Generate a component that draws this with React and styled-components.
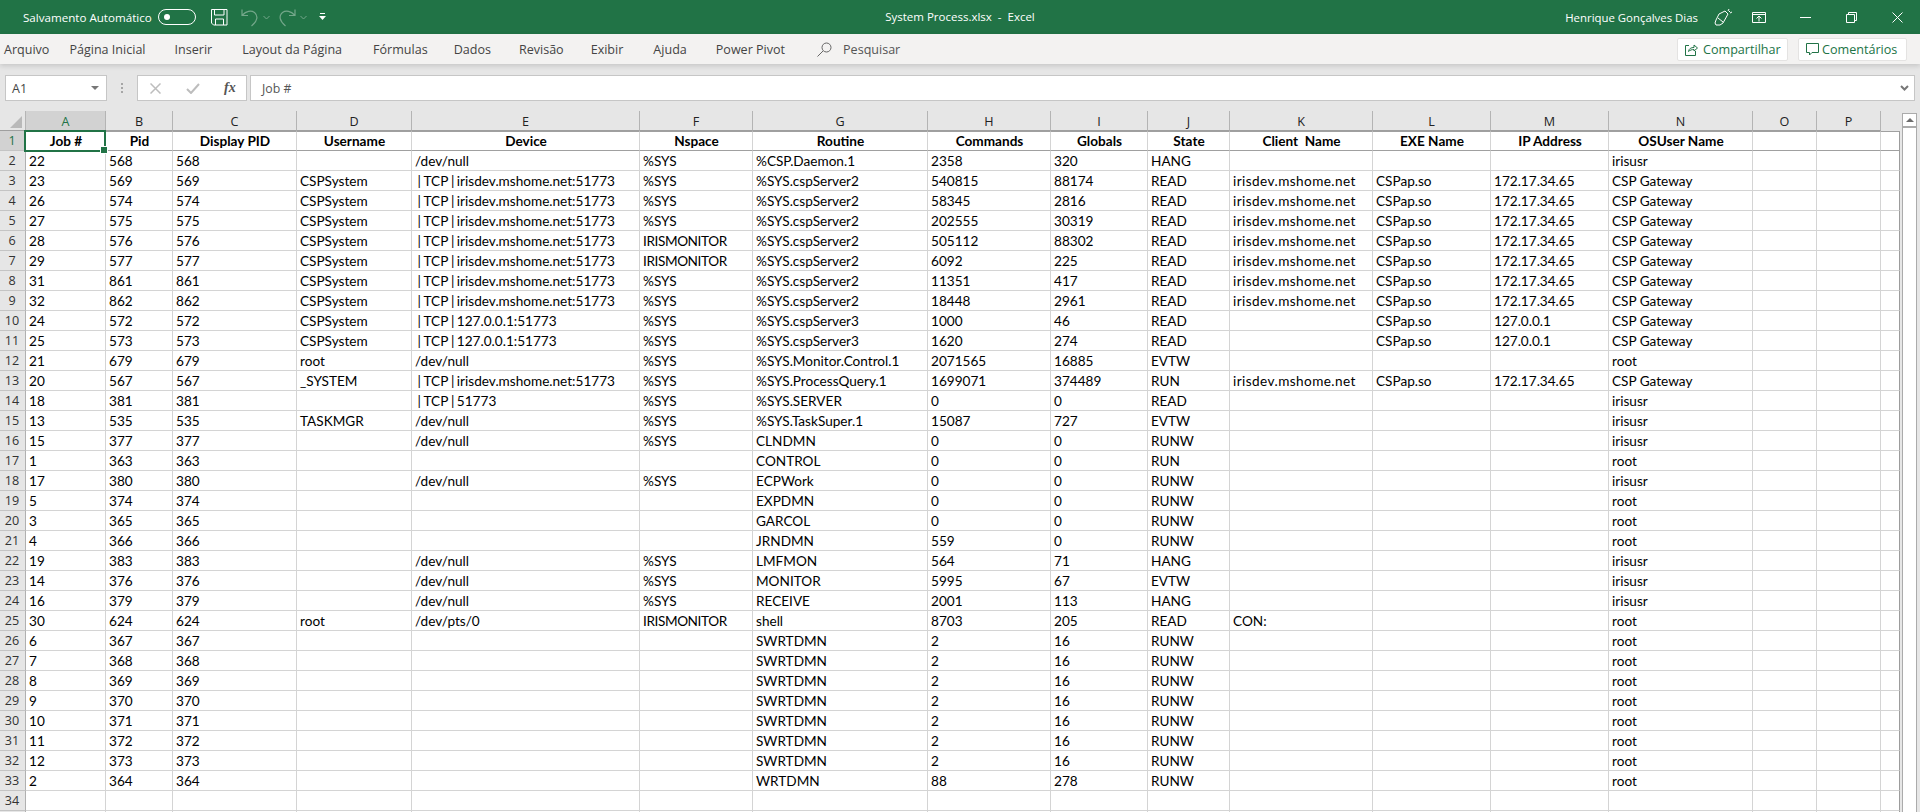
import React from "react";
import styled, { createGlobalStyle } from "styled-components";

const Global = createGlobalStyle`
  html, body { margin: 0; padding: 0; height: 812px; overflow: hidden; background: #e6e6e6; }
  * { box-sizing: border-box; }
`;

const UI = `"Open Sans", "Noto Sans", sans-serif`;
const SHEET = `"Lato", "Liberation Sans", sans-serif`;
const COLS = "26px 80px 67px 124px 115px 228px 113px 175px 123px 97px 82px 143px 118px 118px 144px 64px 64px 19px";
const LETTERS = "ABCDEFGHIJKLMNOP".split("");
const HEADERS = ["Job #", "Pid", "Display PID", "Username", "Device", "Nspace", "Routine", "Commands", "Globals", "State", "Client  Name", "EXE Name", "IP Address", "OSUser Name", "", ""];

const BAR = "\u2009\u200a|\u2009\u200a";
const GW = `${BAR}TCP${BAR}irisdev.mshome.net:51773`;
const LOCAL = `${BAR}TCP${BAR}127.0.0.1:51773`;
const H = "irisdev.mshome.net";
const IP = "172.17.34.65";
const raw = [
  ["22","568","568","","/dev/null","%SYS","%CSP.Daemon.1","2358","320","HANG","","","","irisusr"],
  ["23","569","569","CSPSystem",GW,"%SYS","%SYS.cspServer2","540815","88174","READ",H,"CSPap.so",IP,"CSP Gateway"],
  ["26","574","574","CSPSystem",GW,"%SYS","%SYS.cspServer2","58345","2816","READ",H,"CSPap.so",IP,"CSP Gateway"],
  ["27","575","575","CSPSystem",GW,"%SYS","%SYS.cspServer2","202555","30319","READ",H,"CSPap.so",IP,"CSP Gateway"],
  ["28","576","576","CSPSystem",GW,"IRISMONITOR","%SYS.cspServer2","505112","88302","READ",H,"CSPap.so",IP,"CSP Gateway"],
  ["29","577","577","CSPSystem",GW,"IRISMONITOR","%SYS.cspServer2","6092","225","READ",H,"CSPap.so",IP,"CSP Gateway"],
  ["31","861","861","CSPSystem",GW,"%SYS","%SYS.cspServer2","11351","417","READ",H,"CSPap.so",IP,"CSP Gateway"],
  ["32","862","862","CSPSystem",GW,"%SYS","%SYS.cspServer2","18448","2961","READ",H,"CSPap.so",IP,"CSP Gateway"],
  ["24","572","572","CSPSystem",LOCAL,"%SYS","%SYS.cspServer3","1000","46","READ","","CSPap.so","127.0.0.1","CSP Gateway"],
  ["25","573","573","CSPSystem",LOCAL,"%SYS","%SYS.cspServer3","1620","274","READ","","CSPap.so","127.0.0.1","CSP Gateway"],
  ["21","679","679","root","/dev/null","%SYS","%SYS.Monitor.Control.1","2071565","16885","EVTW","","","","root"],
  ["20","567","567","_SYSTEM",GW,"%SYS","%SYS.ProcessQuery.1","1699071","374489","RUN",H,"CSPap.so",IP,"CSP Gateway"],
  ["18","381","381","",`${BAR}TCP${BAR}51773`,"%SYS","%SYS.SERVER","0","0","READ","","","","irisusr"],
  ["13","535","535","TASKMGR","/dev/null","%SYS","%SYS.TaskSuper.1","15087","727","EVTW","","","","irisusr"],
  ["15","377","377","","/dev/null","%SYS","CLNDMN","0","0","RUNW","","","","irisusr"],
  ["1","363","363","","","","CONTROL","0","0","RUN","","","","root"],
  ["17","380","380","","/dev/null","%SYS","ECPWork","0","0","RUNW","","","","irisusr"],
  ["5","374","374","","","","EXPDMN","0","0","RUNW","","","","root"],
  ["3","365","365","","","","GARCOL","0","0","RUNW","","","","root"],
  ["4","366","366","","","","JRNDMN","559","0","RUNW","","","","root"],
  ["19","383","383","","/dev/null","%SYS","LMFMON","564","71","HANG","","","","irisusr"],
  ["14","376","376","","/dev/null","%SYS","MONITOR","5995","67","EVTW","","","","irisusr"],
  ["16","379","379","","/dev/null","%SYS","RECEIVE","2001","113","HANG","","","","irisusr"],
  ["30","624","624","root","/dev/pts/0","IRISMONITOR","shell","8703","205","READ","CON:","","","root"],
  ["6","367","367","","","","SWRTDMN","2","16","RUNW","","","","root"],
  ["7","368","368","","","","SWRTDMN","2","16","RUNW","","","","root"],
  ["8","369","369","","","","SWRTDMN","2","16","RUNW","","","","root"],
  ["9","370","370","","","","SWRTDMN","2","16","RUNW","","","","root"],
  ["10","371","371","","","","SWRTDMN","2","16","RUNW","","","","root"],
  ["11","372","372","","","","SWRTDMN","2","16","RUNW","","","","root"],
  ["12","373","373","","","","SWRTDMN","2","16","RUNW","","","","root"],
  ["2","364","364","","","","WRTDMN","88","278","RUNW","","","","root"],
];

const Page = styled.div`
  width: 1920px;
  height: 812px;
  overflow: hidden;
  display: flex;
  flex-direction: column;
  background: #e6e6e6;
`;

const TitleBar = styled.header`
  height: 34px;
  flex: none;
  background: #217346;
  color: #fff;
  font: 11.6px ${UI};
  display: grid;
  grid-template-columns: 1fr auto 1fr;
  align-items: center;
`;
const QuickAccess = styled.div`
  display: flex;
  align-items: center;
  padding-left: 23px;
`;
const AutoSave = styled.span`
  width: 135px;
  white-space: nowrap;
`;
const Toggle = styled.span`
  width: 38px;
  height: 16px;
  border: 1px solid #fff;
  border-radius: 8px;
  display: flex;
  align-items: center;
  padding-left: 5px;
  margin-right: 15px;
  &::before {
    content: "";
    width: 6px;
    height: 6px;
    border-radius: 50%;
    background: #fff;
  }
`;
const QuickIcon = styled.svg`
  flex: none;
  display: block;
  margin-left: ${(p) => p.$ml || 0}px;
`;
const DocTitle = styled.div`
  font-size: 11.5px;
  white-space: pre;
  position: relative;
  top: -1px;
`;
const TitleRight = styled.div`
  display: flex;
  align-items: center;
  justify-content: flex-end;
`;
const UserName = styled.span`
  font-size: 11.4px;
  white-space: nowrap;
  margin-right: 16px;
`;
const WinIcon = styled.svg`
  display: block;
  flex: none;
  margin-right: ${(p) => p.$mr || 0}px;
`;

const Ribbon = styled.nav`
  height: 30px;
  flex: none;
  background: #f3f2f1;
  box-shadow: 0 2px 5px rgba(0, 0, 0, 0.14);
  position: relative;
  z-index: 1;
  display: flex;
  align-items: center;
  padding: 0 13px 0 4px;
  font: 12.55px ${UI};
  color: #444;
`;
const Tab = styled.span`
  white-space: nowrap;
  margin-right: ${(p) => p.$mr}px;
`;
const SearchWrap = styled.span`
  display: flex;
  align-items: center;
  gap: 11px;
  flex: 1;
  color: #555;
`;
const ShareButton = styled.button`
  height: 23px;
  width: ${(p) => p.$w}px;
  margin-left: ${(p) => p.$ml || 0}px;
  display: flex;
  align-items: center;
  gap: ${(p) => p.$gap}px;
  padding: 0 0 0 7px;
  background: #fff;
  border: 1px solid #e4e3e2;
  border-radius: 2px;
  font: 12.6px ${UI};
  color: #217346;
  white-space: nowrap;
`;

const FormulaBar = styled.div`
  height: 47px;
  flex: none;
  display: flex;
  padding: 11px 5px 0 5px;
  align-items: flex-start;
`;
const NameBox = styled.div`
  width: 102px;
  height: 26px;
  background: #fff;
  border: 1px solid #c6c6c6;
  font: 12.5px ${UI};
  color: #444;
  display: flex;
  align-items: center;
  justify-content: space-between;
  padding: 0 6px;
  &::after {
    content: "";
    border-left: 4px solid transparent;
    border-right: 4px solid transparent;
    border-top: 4px solid #777;
    margin-right: 1px;
  }
`;
const Grip = styled.span`
  width: 30px;
  height: 26px;
  display: flex;
  align-items: center;
  justify-content: center;
  &::before {
    content: "";
    width: 2px;
    height: 10px;
    background: repeating-linear-gradient(#a6a6a6 0 2px, transparent 2px 4px);
  }
`;
const FxBox = styled.div`
  width: 110px;
  height: 26px;
  background: #fff;
  border: 1px solid #c6c6c6;
  display: flex;
  align-items: center;
  padding-left: 12px;
  gap: 25px;
`;
const FxLabel = styled.i`
  font: italic 700 14px "Liberation Serif", serif;
  color: #555;
  margin-left: -1px;
`;
const FormulaInput = styled.div`
  flex: 1;
  height: 26px;
  margin-left: 3px;
  background: #fff;
  border: 1px solid #c6c6c6;
  display: flex;
  align-items: center;
  justify-content: space-between;
  padding: 0 5px 0 11px;
  font: 12.3px ${UI};
  color: #555;
`;

const SheetArea = styled.div`
  flex: 1;
  display: flex;
  min-height: 0;
  overflow: hidden;
`;
const Grid = styled.div`
  width: 1899px;
  flex: none;
`;
const Row = styled.div`
  display: grid;
  grid-template-columns: ${COLS};
  height: 20px;
`;
const Corner = styled.div`
  border-right: 1px solid #b5b5b5;
  border-bottom: 1px solid #9f9f9f;
  display: flex;
  justify-content: flex-end;
  align-items: flex-end;
  padding: 0 3px 2px 0;
  &::before {
    content: "";
    border-style: solid;
    border-width: 0 0 12px 12px;
    border-color: transparent transparent #b9b9b9 transparent;
  }
`;
const ColHead = styled.div`
  background: ${(p) => (p.$active ? "#d2d2d2" : "#e6e6e6")};
  color: ${(p) => (p.$active ? "#217346" : "#222")};
  border-right: 1px solid ${(p) => (p.$blank ? "transparent" : "#b4b4b4")};
  border-bottom: 1px solid ${(p) => (p.$blank ? "#e6e6e6" : "#9f9f9f")};
  font: 12.6px ${UI};
  text-align: center;
  padding-top: 2px;
  line-height: 17px;
`;
const RowHead = styled.div`
  background: ${(p) => (p.$active ? "#d2d2d2" : "#e6e6e6")};
  color: ${(p) => (p.$active ? "#217346" : "#333")};
  border-right: 1px solid #b0b0b0;
  border-bottom: 1px solid #c4c4c4;
  font: 12.6px ${UI};
  text-align: center;
  padding: 1px 1px 0 0;
  line-height: 18px;
`;
const Cell = styled.div`
  position: relative;
  background: #fff;
  color: #000;
  border-right: 1px solid ${(p) => (p.$edge ? "#9c9c9c" : "#d4d4d4")};
  border-top: ${(p) => (p.$head ? "1px solid #a0a0a0" : "none")};
  border-bottom: 1px solid ${(p) => (p.$head ? "#a0a0a0" : "#d4d4d4")};
  font: ${(p) => (p.$head ? 700 : 400)} 13.6px ${SHEET};
  letter-spacing: ${(p) => p.$spacing || 0}px;
  text-align: ${(p) => (p.$head ? "center" : "left")};
  padding: ${(p) => (p.$head ? "1px" : "2px")} 2px 0 3px;
  line-height: 17px;
  white-space: pre;
`;
const Selection = styled.span`
  position: absolute;
  left: -2px;
  top: -2px;
  right: -1px;
  bottom: -2px;
  border: 2px solid #217346;
  pointer-events: none;
  z-index: 2;
  &::after {
    content: "";
    position: absolute;
    right: -4px;
    bottom: -4px;
    width: 6px;
    height: 6px;
    background: #217346;
    border: 1px solid #fff;
  }
`;
const ScrollTrack = styled.div`
  width: 15px;
  flex: none;
  margin: 2px 0 0 3px;
  background: #fff;
  border: 1px solid #ababab;
  border-bottom: none;
  display: flex;
  flex-direction: column;
`;
const ScrollUp = styled.div`
  height: 14px;
  flex: none;
  background: #fff;
  border-bottom: 2px solid #ababab;
  display: flex;
  align-items: center;
  justify-content: center;
  &::before {
    content: "";
    border-left: 4px solid transparent;
    border-right: 4px solid transparent;
    border-bottom: 4px solid #6d6d6d;
  }
`;

const Save = () => (
  <QuickIcon width="17" height="17" viewBox="0 0 17 17" fill="none" stroke="#fff" strokeWidth="1">
    <path d="M.5.5h15.5v15.5H2.5l-2-2z" />
    <path d="M3.5.5v5.5h9.5V.5M4.5 16v-6h8v6" />
  </QuickIcon>
);
const Undo = ({ flip }) => (
  <QuickIcon $ml={flip ? 8 : 13} width="18" height="19" viewBox="0 0 18 19" fill="none" stroke="#74a78a" strokeWidth="1.2" style={flip ? { transform: "scaleX(-1)" } : undefined}>
    <path d="M1 1.5v6h6M1.5 7C5 3 10 2 13.5 4.500 17.500 8 16.500 13 10.500 18" />
  </QuickIcon>
);
const Caret = ({ color = "#74a78a" }) => (
  <QuickIcon $ml={4} width="7" height="5" viewBox="0 0 7 5" fill="none" stroke={color}>
    <path d="M.5 1l3 3 3-3" />
  </QuickIcon>
);
const Customize = () => (
  <QuickIcon $ml={12} width="7" height="8" viewBox="0 0 7 8" fill="#fff">
    <path d="M1 0h5v1H1zM0 3h7L3.500 7z" />
  </QuickIcon>
);
const Pen = () => (
  <WinIcon $mr={20} width="18" height="18" viewBox="0 0 18 18" fill="none" stroke="#fff" strokeWidth="1">
    <path d="M5 6l6-3 3 3-5 9-3 2H2l-1-2 1-3zM4 10l5 4M14 3l1-2M16 5l2-1M15 4l1-1" />
  </WinIcon>
);
const RibbonOptions = () => (
  <WinIcon $mr={34} width="14" height="11" viewBox="0 0 14 11" fill="none" stroke="#fff">
    <path d="M.5.500h13v10H.5zM.5 2.500h13M7 9.500V4M4.500 6.500L7 4l2.500 2.500" />
  </WinIcon>
);
const Minimize = () => (
  <WinIcon $mr={35} width="11" height="11" viewBox="0 0 11 11" stroke="#fff">
    <path d="M0 5.500h11" />
  </WinIcon>
);
const Restore = () => (
  <WinIcon $mr={35} width="11" height="11" viewBox="0 0 11 11" fill="none" stroke="#fff">
    <path d="M.5 2.500h8v8h-8zM2.500 2.500v-2h8v8h-2" />
  </WinIcon>
);
const Close = () => (
  <WinIcon $mr={17} width="11" height="11" viewBox="0 0 11 11" stroke="#fff">
    <path d="M.5.500l10 10M10.500.500l-10 10" />
  </WinIcon>
);
const Search = () => (
  <svg width="15" height="15" viewBox="0 0 15 15" fill="none" stroke="#666" style={{ display: "block" }}>
    <circle cx="9.500" cy="5.500" r="4.500" />
    <path d="M6 9l-5.500 5.500" />
  </svg>
);
const ShareIcon = () => (
  <svg width="13" height="13" viewBox="0 0 13 13" fill="none" stroke="#217346" style={{ display: "block", flex: "none" }}>
    <path d="M4 2.500H.5v10h10V8M3.500 8.500C4 5.500 6 4.500 9 4.500V2l3.500 3L9 8V6.500C7 6.500 5 7 3.500 8.500z" />
  </svg>
);
const CommentIcon = () => (
  <svg width="13" height="13" viewBox="0 0 13 13" fill="none" stroke="#217346" style={{ display: "block", flex: "none" }}>
    <path d="M.5.500h12v9H6L3.500 12V9.500h-3z" />
  </svg>
);
const CancelIcon = () => (
  <svg width="11" height="11" viewBox="0 0 11 11" stroke="#bdbdbd" strokeWidth="1.5" style={{ display: "block" }}>
    <path d="M.5.500l10 10M10.500.500l-10 10" />
  </svg>
);
const CheckIcon = () => (
  <svg width="14" height="11" viewBox="0 0 14 11" fill="none" stroke="#bdbdbd" strokeWidth="2" style={{ display: "block" }}>
    <path d="M1 6l4 4 8-9" />
  </svg>
);
const Chevron = () => (
  <svg width="9" height="6" viewBox="0 0 9 6" fill="none" stroke="#777" strokeWidth="2" style={{ display: "block" }}>
    <path d="M1 1l3.500 3.500L8 1" />
  </svg>
);

const tabs = [
  ["Arquivo", 20], ["Página Inicial", 29], ["Inserir", 30], ["Layout da Página", 31], ["Fórmulas", 26],
  ["Dados", 28], ["Revisão", 27], ["Exibir", 30], ["Ajuda", 29], ["Power Pivot", 32],
];

const spacingFor = (v) => {
  if (v === H) return 0.42;
  if (v === "IRISMONITOR") return -0.4;
  return 0;
};

export default function App() {
  const blanks = ["", ""];
  return (
    <Page>
      <Global />
      <TitleBar>
        <QuickAccess>
          <AutoSave>Salvamento Automático</AutoSave>
          <Toggle />
          <Save />
          <Undo />
          <Caret />
          <Undo flip />
          <Caret />
          <Customize />
        </QuickAccess>
        <DocTitle>{"System Process.xlsx  -  Excel"}</DocTitle>
        <TitleRight>
          <UserName>Henrique Gonçalves Dias</UserName>
          <Pen />
          <RibbonOptions />
          <Minimize />
          <Restore />
          <Close />
        </TitleRight>
      </TitleBar>

      <Ribbon>
        {tabs.map(([t, m]) => (
          <Tab key={t} $mr={m}>{t}</Tab>
        ))}
        <SearchWrap>
          <Search />
          Pesquisar
        </SearchWrap>
        <ShareButton $w={111} $gap={5}>
          <ShareIcon />
          Compartilhar
        </ShareButton>
        <ShareButton $w={109} $ml={10} $gap={3}>
          <CommentIcon />
          Comentários
        </ShareButton>
      </Ribbon>

      <FormulaBar>
        <NameBox>A1</NameBox>
        <Grip />
        <FxBox>
          <CancelIcon />
          <CheckIcon />
          <FxLabel>fx</FxLabel>
        </FxBox>
        <FormulaInput>
          Job #
          <Chevron />
        </FormulaInput>
      </FormulaBar>

      <SheetArea>
        <Grid>
          <Row>
            <Corner />
            {LETTERS.map((l, i) => (
              <ColHead key={l} $active={i === 0}>{l}</ColHead>
            ))}
            <ColHead $blank />
          </Row>
          <Row>
            <RowHead $active>1</RowHead>
            {HEADERS.map((h, i) => (
              <Cell key={i} $head>
                {h}
                {i === 0 && <Selection />}
              </Cell>
            ))}
            <Cell $head $edge />
          </Row>
          {raw.map((r, i) => (
            <Row key={i}>
              <RowHead>{i + 2}</RowHead>
              {[...r, ...blanks].map((v, j) => (
                <Cell key={j} $spacing={spacingFor(v)}>{v}</Cell>
              ))}
              <Cell $edge />
            </Row>
          ))}
          <Row>
            <RowHead>34</RowHead>
            {HEADERS.map((_, j) => (
              <Cell key={j} />
            ))}
            <Cell $edge />
          </Row>
          <Row>
            <RowHead />
            {HEADERS.map((_, j) => (
              <Cell key={j} />
            ))}
            <Cell $edge />
          </Row>
        </Grid>
        <ScrollTrack>
          <ScrollUp />
        </ScrollTrack>
      </SheetArea>
    </Page>
  );
}
